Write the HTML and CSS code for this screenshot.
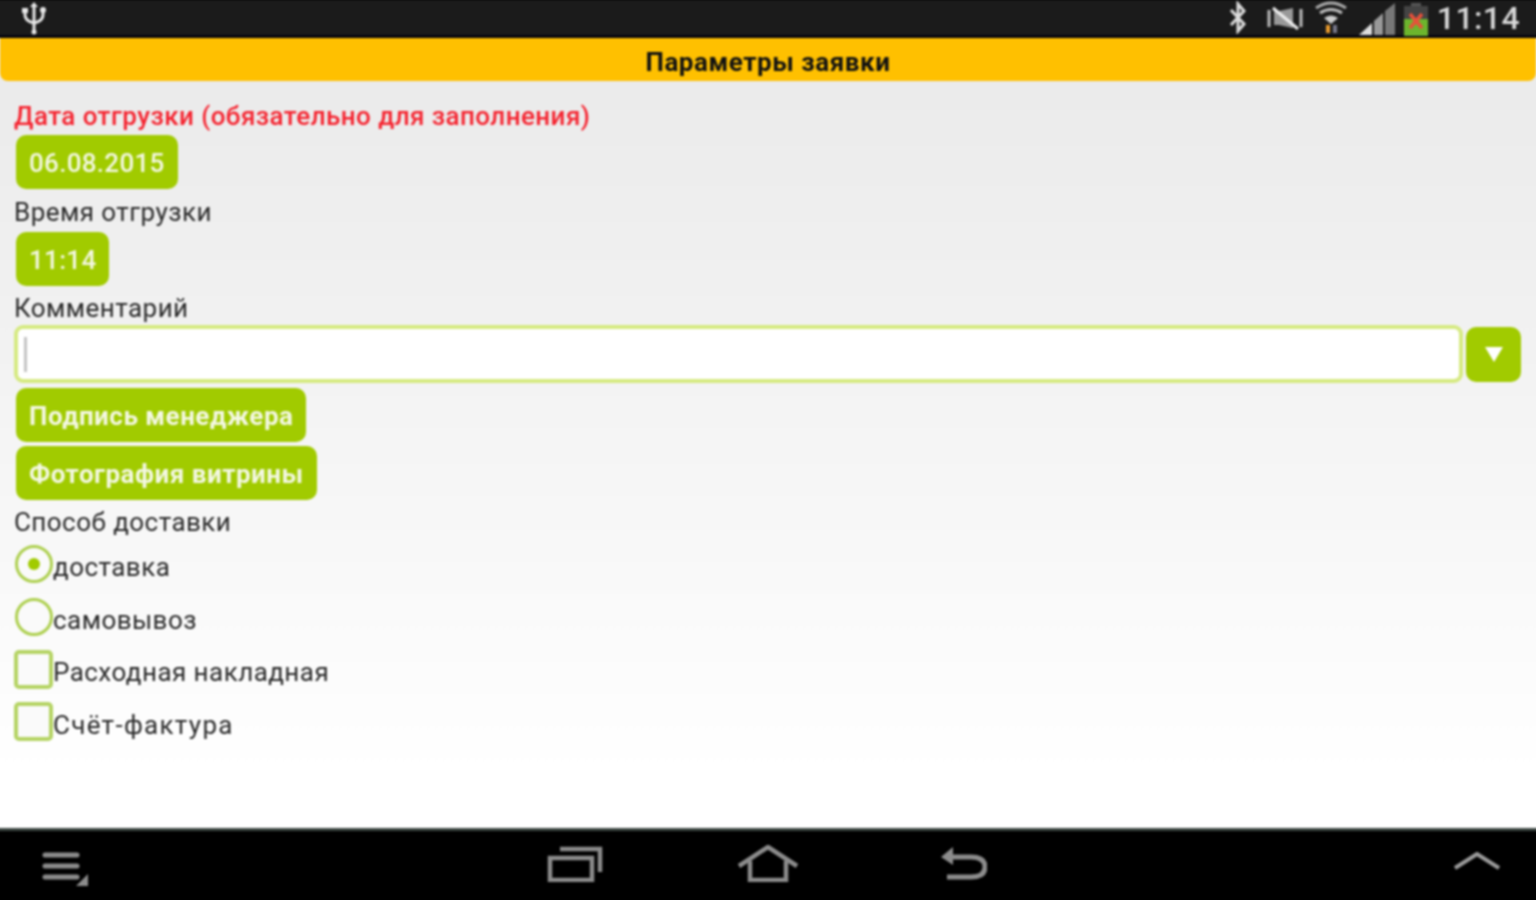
FILE: index.html
```html
<!DOCTYPE html>
<html lang="ru">
<head>
<meta charset="UTF-8">
<meta name="viewport" content="width=device-width, initial-scale=1.0">
<title>Параметры заявки</title>
<link rel="stylesheet" href="styles.css">
</head>
<body>
<div class="screen">

<!-- status bar -->
<div class="status-bar">
    <svg class="ic-usb" width="24" height="34" viewBox="0 0 24 34" fill="none" stroke="#e8e8e8" stroke-width="3">
        <path d="M12 4V30"/><path d="M3 9v4q0 6 9 8q9-2 9-8V9"/>
        <circle cx="12" cy="30" r="2.5" fill="#e8e8e8" stroke="none"/>
        <path d="M12 0l4 5H8z" fill="#e8e8e8" stroke="none"/>
        <rect x="0" y="6" width="6" height="5" fill="#e8e8e8" stroke="none"/>
        <circle cx="21" cy="8" r="3" fill="#e8e8e8" stroke="none"/>
    </svg>
    <div class="status-right">
        <svg class="ic-bt" width="20" height="33" viewBox="0 0 20 33" fill="none" stroke="#ddd" stroke-width="3">
            <path d="M3 9L16 23L10 30V3L16 10L3 24"/>
        </svg>
        <svg class="ic-mute" width="38" height="24" viewBox="0 0 38 24" fill="none" stroke="#bbb" stroke-width="3">
            <path d="M2 4v17"/><path d="M34 3v18"/>
            <path d="M7 5h5l14-3v20l-14-3H7z" fill="#999" stroke="none"/>
            <path d="M6 2L31 23" stroke="#eee"/>
        </svg>
        <svg class="ic-wifi" width="32" height="33" viewBox="0 0 32 33" fill="none">
            <path d="M1 7Q16-3 31 7" stroke="#aaa" stroke-width="3"/>
            <path d="M5 12Q16 5 27 12" stroke="#bbb" stroke-width="3"/>
            <path d="M9 17Q16 12 23 17L16 23z" fill="#ccc"/>
            <path d="M11 24h4v8h-4z" fill="#e89a2c"/>
            <path d="M18 24h4v8h-4z" fill="#778"/>
        </svg>
        <svg class="ic-signal" width="36" height="32" viewBox="0 0 36 32">
            <path d="M36 0V32H26V8z" fill="#777"/>
            <path d="M24 10V32H15V18z" fill="#999"/>
            <path d="M13 20V32H0z" fill="#ddd"/>
        </svg>
        <svg class="ic-batt" width="24" height="33" viewBox="0 0 24 33">
            <rect x="7" y="0" width="10" height="4" fill="#555"/>
            <rect x="0" y="3" width="24" height="13" fill="#444"/>
            <rect x="0" y="16" width="24" height="17" fill="#6cb52d"/>
            <path d="M6 11L18 25M18 11L6 25" stroke="#e8503a" stroke-width="3.5"/>
        </svg>
        <span class="clock">11:14</span>
    </div>
</div>

<!-- title -->
<div class="title-bar">Параметры заявки</div>

<div class="content">
    <div class="lbl lbl-first lbl-red">Дата отгрузки (обязательно для заполнения)</div>
    <button class="btn">06.08.2015</button>

    <div class="lbl">Время отгрузки</div>
    <button class="btn">11:14</button>

    <div class="lbl lbl-short">Комментарий</div>
    <div class="comment-row">
        <div class="comment-input"><span class="caret"></span></div>
        <button class="btn btn-drop"><span class="tri"></span></button>
    </div>

    <button class="btn btn-bold btn-sign">Подпись менеджера</button>
    <button class="btn btn-bold btn-photo">Фотография витрины</button>

    <div class="lbl lbl-delivery">Способ доставки</div>
    <div class="opt"><span class="radio checked"></span>доставка</div>
    <div class="opt"><span class="radio"></span>самовывоз</div>
    <div class="opt"><span class="check"></span>Расходная накладная</div>
    <div class="opt opt-wide"><span class="check"></span>Счёт-фактура</div>
</div>

<!-- android nav -->
<div class="nav-bar">
    <svg class="ic-menu" width="46" height="34" viewBox="0 0 46 34" fill="none" stroke="#8c8c8c" stroke-width="5" stroke-linecap="round">
        <path d="M3 3H35"/><path d="M3 14H35"/><path d="M3 25H35"/>
        <path d="M46 22V34H34z" fill="#8c8c8c" stroke="none"/>
    </svg>
    <svg class="ic-recent" width="56" height="37" viewBox="0 0 56 37" fill="none" stroke="#8c8c8c" stroke-width="4.5">
        <rect x="3" y="13" width="42" height="22"/>
        <path d="M13 4H53V27"/>
    </svg>
    <svg class="ic-home" width="62" height="37" viewBox="0 0 62 37" fill="none" stroke="#8c8c8c" stroke-width="4.5">
        <path d="M2 21L31 2L60 21"/>
        <path d="M13 16V35H49V16"/>
    </svg>
    <svg class="ic-back" width="46" height="33" viewBox="0 0 46 33" fill="none" stroke="#8c8c8c" stroke-width="5">
        <path d="M10 10H30Q44 10 44 20Q44 30 30 30H6"/>
        <path d="M0 10L12 0V18z" fill="#8c8c8c" stroke="none"/>
    </svg>
    <svg class="ic-up" width="46" height="18" viewBox="0 0 46 18" fill="none" stroke="#9a9a9a" stroke-width="4">
        <path d="M1 16L23 2L45 16"/>
    </svg>
</div>

</div>
</body>
</html>
```

FILE: styles.css
```css
html, body {
  margin: 0;
  padding: 0;
  overflow: hidden;
}
body {
  background: #000;
  height: 900px;
}
/* 4px wider on each side so the blur doesn't fade at the window edge */
.screen {
  width: 1544px;
  height: 900px;
  margin-left: -4px;
  display: flex;
  flex-direction: column;
  background: #ebebeb;
  font-family: Roboto, "Liberation Sans", sans-serif;
  filter: blur(0.8px);
}

/* status bar */
.status-bar {
  height: 38px;
  box-sizing: border-box;
  background: #1b1b1b;
  border-bottom: 3px solid #05050f;
  padding-left: 26px;
  padding-right: 20px;
  display: flex;
  align-items: center;
  justify-content: space-between;
  flex-shrink: 0;
}
.status-right {
  display: flex;
  align-items: center;
}
.ic-usb { margin-top: 3px; }
.ic-bt { margin-right: 19px; }
.ic-mute { margin-right: 10px; }
.ic-wifi { margin-right: 12px; }
.ic-signal { margin-right: 9px; margin-top: 3px; }
.ic-batt { margin-right: 9px; margin-top: 3px; }
.clock {
  font-size: 32px;
  font-weight: 500;
  color: #d8d8d8;
  line-height: 36px;
  letter-spacing: 0.4px;
}

.title-bar {
  height: 43px;
  margin: 0 4px;
  background: #ffc000;
  border-radius: 0 0 8px 8px;
  color: #111;
  font-size: 26px;
  font-weight: 700;
  letter-spacing: 0.55px;
  line-height: 48px;
  text-align: center;
  flex-shrink: 0;
}

.content {
  flex: 1;
  background: linear-gradient(#ebebeb 0, #f1f1f1 30%, #fff 92%);
  padding: 0 19px 0 18px;
}

.lbl {
  height: 43px;
  line-height: 46px;
  font-size: 26px;
  letter-spacing: 0.45px;
  color: #2a2a2a;
}
.lbl-first {
  height: 54px;
  line-height: 70px;
}
.lbl-red {
  color: #f5232f;
  font-weight: 500;
  letter-spacing: 0.45px;
}
.lbl-short {
  height: 39px;
  line-height: 44px;
}
.lbl-delivery {
  height: 40px;
  line-height: 44px;
}

.btn {
  display: block;
  height: 54px;
  margin: 0 0 0 2px;
  padding: 0 13px;
  border: 0;
  border-radius: 10px;
  background: #a1cb00;
  color: #f4f8e4;
  font-family: inherit;
  font-size: 26px;
  font-weight: 500;
  letter-spacing: 0.3px;
  line-height: 57px;
}
.btn-bold {
  font-weight: 700;
  letter-spacing: 0.5px;
  line-height: 56px;
}
.btn-sign { margin-top: 5px; }
.btn-photo { margin-top: 4px; }

.comment-row {
  display: flex;
  align-items: center;
  height: 58px;
}
.comment-input {
  flex: 1;
  height: 58px;
  box-sizing: border-box;
  background: #fff;
  border: 4px solid #d6ea82;
  border-radius: 9px;
  padding: 8px 0 0 6px;
}
.caret {
  display: block;
  width: 3px;
  height: 35px;
  background: #c4c4c4;
}
.btn-drop {
  width: 55px;
  height: 55px;
  margin-left: 3px;
  padding: 0;
  display: flex;
  align-items: center;
  justify-content: center;
}
.tri {
  width: 0;
  height: 0;
  border-left: 9px solid transparent;
  border-right: 9px solid transparent;
  border-top: 15px solid #fff;
}

.opt {
  height: 52.5px;
  box-sizing: border-box;
  padding-top: 2px;
  display: flex;
  align-items: center;
  font-size: 26px;
  letter-spacing: 0.45px;
  color: #2a2a2a;
}
.opt-wide { letter-spacing: 1.3px; }
.radio {
  width: 32px;
  height: 32px;
  margin-left: 1px;
  margin-top: -6px;
  border: 3px solid #aed050;
  border-radius: 50%;
  background: #fafafa;
  display: flex;
  align-items: center;
  justify-content: center;
  flex-shrink: 0;
}
.radio.checked::after {
  content: "";
  width: 12px;
  height: 12px;
  border-radius: 50%;
  background: #a1cb00;
}
.check {
  width: 31px;
  height: 31px;
  margin-top: -6px;
  border: 4px solid #b5d464;
  border-radius: 5px;
  background: #fafafa;
  flex-shrink: 0;
}

/* nav bar */
.nav-bar {
  height: 72px;
  box-sizing: border-box;
  background: #000;
  border-top: 3px solid #3c4642;
  display: flex;
  align-items: center;
  flex-shrink: 0;
}
.ic-menu { margin-left: 46px; margin-top: 7px; }
.ic-recent { margin-left: 459px; margin-top: -5px; }
.ic-home { margin-left: 134px; margin-top: -5px; }
.ic-back { margin-left: 142px; margin-top: -5px; }
.ic-up { margin-left: 467px; margin-top: -10px; }
```
